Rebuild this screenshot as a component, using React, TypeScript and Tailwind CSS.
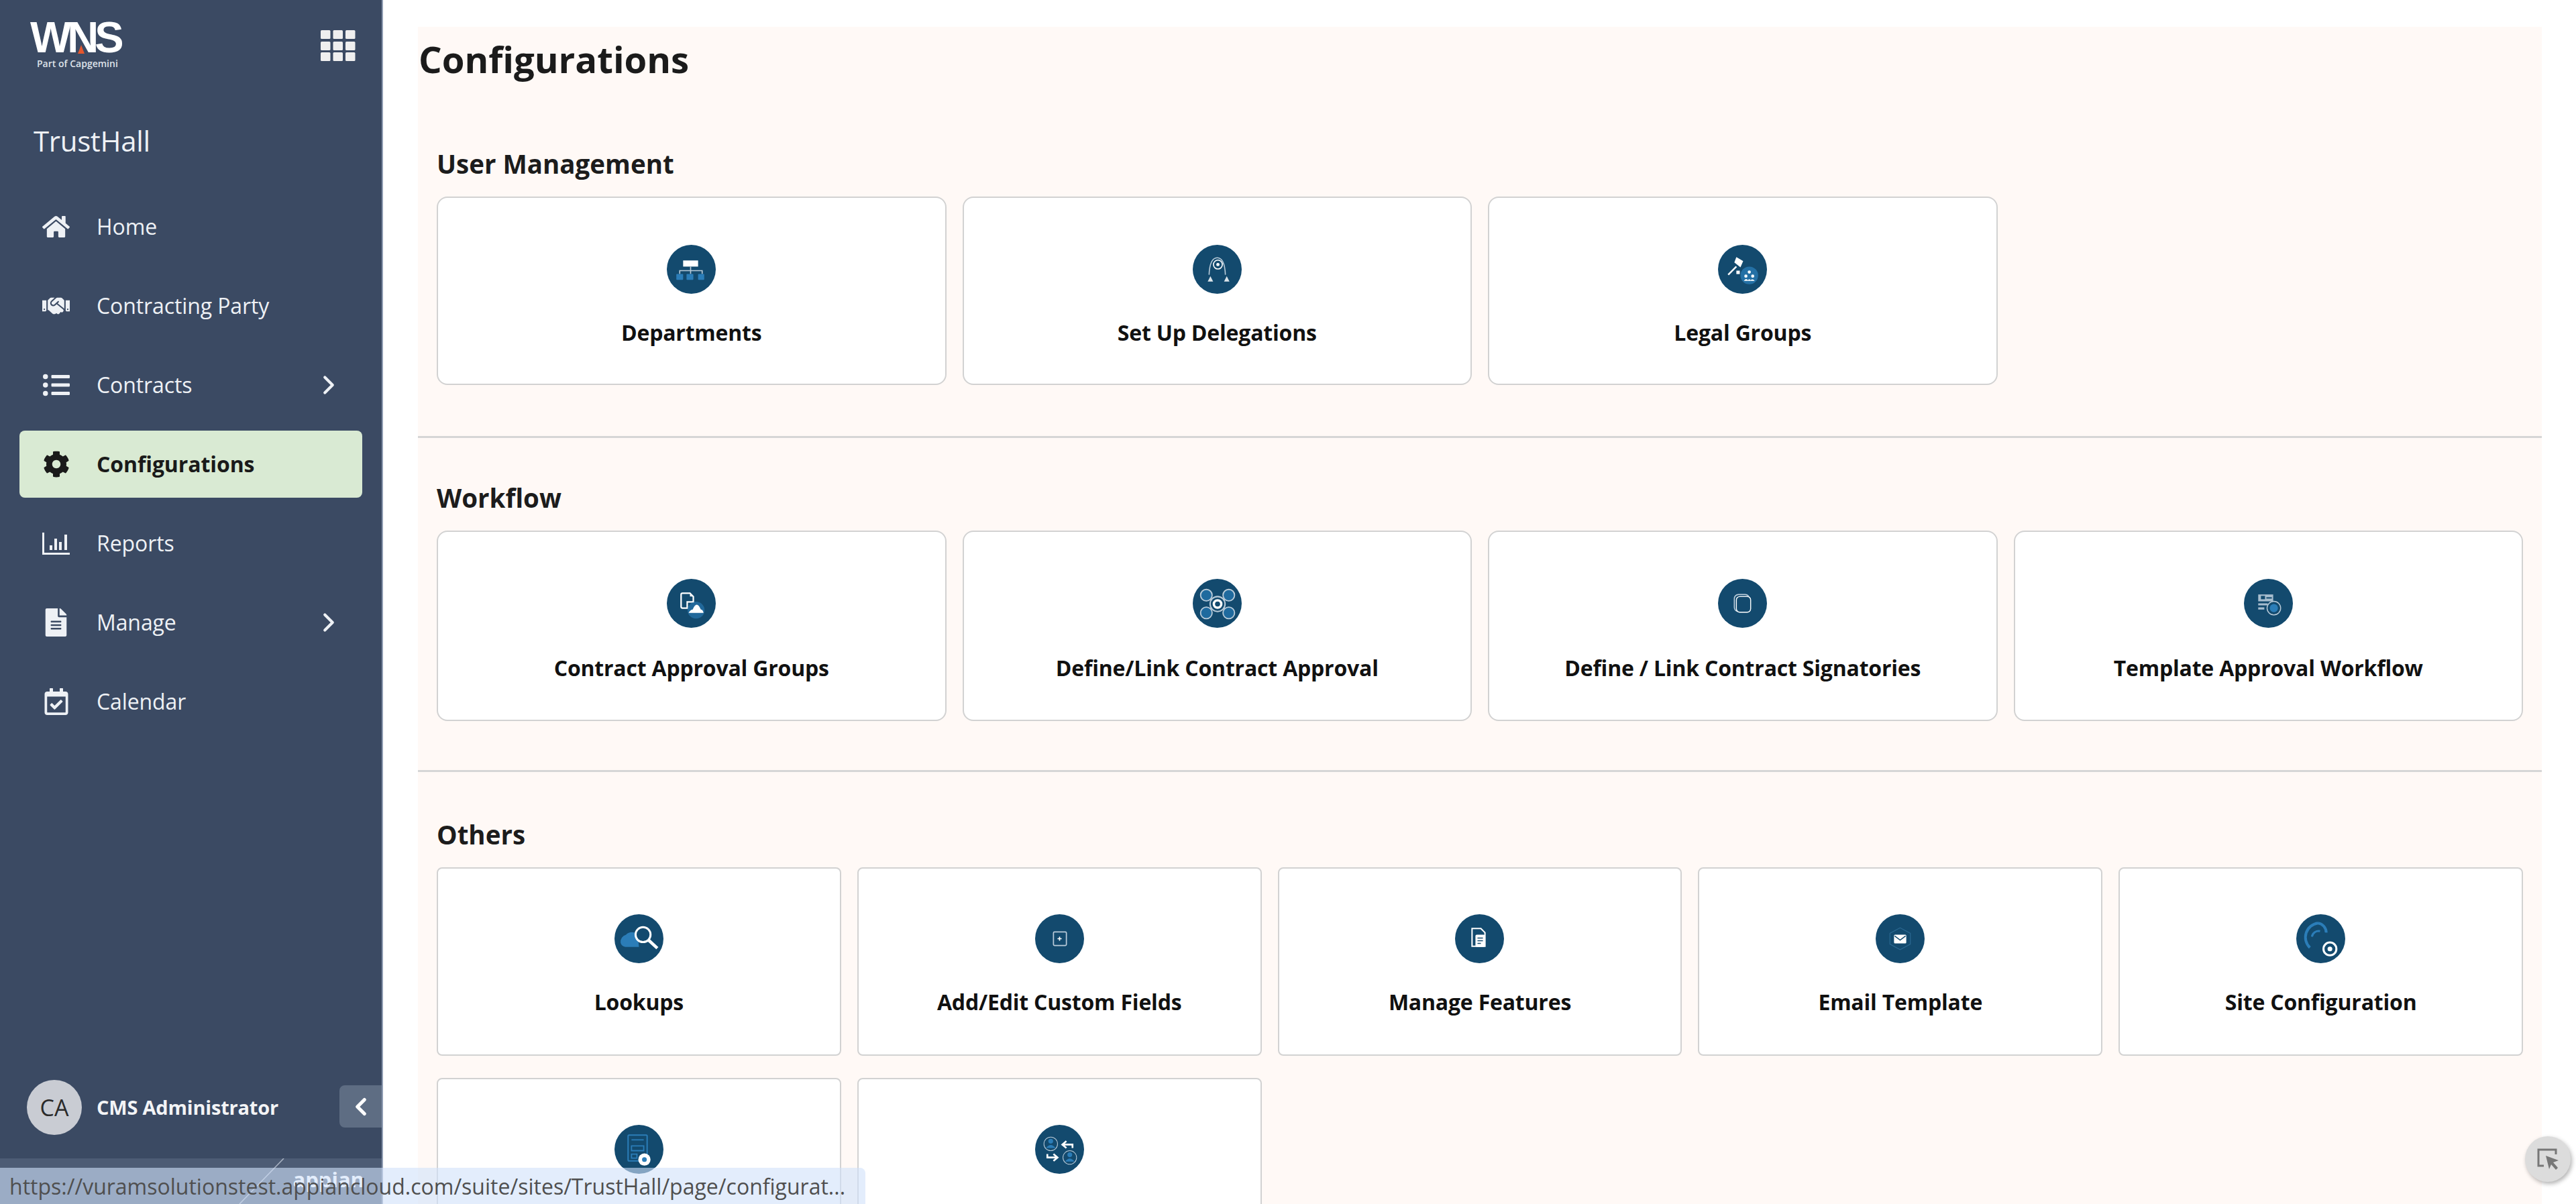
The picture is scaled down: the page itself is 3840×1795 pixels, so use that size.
import React from "react";
import { FaHome, FaHandshake, FaListUl, FaCog, FaFileAlt, FaRegCalendarCheck } from "react-icons/fa";
import { ChevronRight, ChevronLeft } from "lucide-react";

const W = "#ffffff";
const B = "#2b7db8";
const G = "#b9cbd9";

const Disc = ({ children }: { children?: React.ReactNode }) => (
  <svg viewBox="0 0 72 72" className="w-[73px] h-[73px] shrink-0">
    <circle cx="36" cy="36" r="36" fill="#134a6e" />
    {children}
  </svg>
);

const icons: Record<string, React.ReactNode> = {
  departments: (
    <Disc>
      <rect x="24" y="23" width="22" height="9" fill={W} />
      <path d="M35 32v11M19 43v-5h33v5M28 38h14" stroke={G} strokeWidth="1.6" fill="none" />
      <rect x="14" y="43" width="10" height="8.5" rx="1" fill={B} />
      <rect x="29" y="43" width="10" height="8.5" rx="1" fill={B} />
      <rect x="46" y="43" width="9" height="8.5" rx="1" fill={B} />
    </Disc>
  ),
  delegations: (
    <Disc>
      <path d="M24 44C25 22 32 19 36 19s11 3 12 25" stroke={G} strokeWidth="1.6" fill="none" />
      <circle cx="37" cy="29" r="6.5" stroke={W} strokeWidth="1.6" fill="none" />
      <circle cx="37" cy="29" r="2.4" fill={W} />
      <path d="M22 54l4-8 4 8zM46 54l4-8 4 8z" fill={W} opacity=".85" />
    </Disc>
  ),
  legal: (
    <Disc>
      <circle cx="46" cy="45" r="13" fill={B} opacity=".75" />
      <path d="M27 18l10 6-4 9-9-7z" fill={W} />
      <path d="M27 32L15 44" stroke={W} strokeWidth="2.4" />
      <rect x="27" y="38" width="5" height="5" fill={W} />
      <circle cx="41" cy="46" r="2.3" fill={W} />
      <circle cx="46" cy="40" r="2.3" fill={W} />
      <circle cx="51" cy="46" r="2.3" fill={W} />
      <path d="M38 53q3-5 6-1q2-3 4 0q3-3 6 1z" fill={W} />
    </Disc>
  ),
  approvalGroups: (
    <Disc>
      <path d="M23 21h11l5 5v8h-9v9h-7a2 2 0 0 1-2-2V23a2 2 0 0 1 2-2z" stroke={W} strokeWidth="2.2" fill="none" />
      <path d="M34 21l5 5h-5z" fill={W} />
      <circle cx="43" cy="46" r="12.5" fill={B} opacity=".6" />
      <path d="M32 50q3-5 6-5q3-7 6-7t6 7q3 0 4 5z" fill={W} />
    </Disc>
  ),
  linkApproval: (
    <Disc>
      <g stroke={G} strokeWidth="1.8" fill="#1f6a9e">
        <circle cx="20" cy="24" r="8.5" />
        <circle cx="53" cy="24" r="8.5" />
        <circle cx="20" cy="50" r="8.5" />
        <circle cx="53" cy="50" r="8.5" />
      </g>
      <path d="M26 30l4 3M47 30l-4 3M26 44l4-3M47 44l-4-3" stroke={G} strokeWidth="2" />
      <circle cx="36.5" cy="37" r="11" stroke={G} strokeWidth="2" fill="#134a6e" />
      <circle cx="36.5" cy="37" r="5.5" stroke={W} strokeWidth="3.5" fill="none" />
    </Disc>
  ),
  signatories: (
    <Disc>
      <rect x="24" y="23" width="22" height="25" rx="6" stroke={G} strokeWidth="1.6" fill="none" />
      <rect x="27" y="26" width="21" height="23" rx="5" stroke={W} strokeWidth="1.4" fill="#134a6e" />
    </Disc>
  ),
  templateFlow: (
    <Disc>
      <path d="M21 23h22v10H21zM21 36h14v3H21zM21 42h9v3h-9z" fill={G} opacity=".9" />
      <rect x="25" y="25" width="6" height="5" fill="#134a6e" />
      <rect x="33" y="27" width="8" height="2" fill="#134a6e" />
      <circle cx="44" cy="43" r="10" fill="#134a6e" stroke={G} strokeWidth="1.4" />
      <circle cx="44" cy="43" r="6" fill={B} />
    </Disc>
  ),
  lookups: (
    <Disc>
      <path d="M9 42a11 11 0 0 1 8-12a12 12 0 0 1 17 0l2 18H16a8 8 0 0 1-7-6z" fill={B} />
      <circle cx="42" cy="30" r="11" stroke={W} strokeWidth="3" fill="#134a6e" />
      <path d="M50 38l13 12" stroke={W} strokeWidth="4.5" />
    </Disc>
  ),
  customFields: (
    <Disc>
      <rect x="27" y="26" width="19" height="20" rx="1.5" stroke={G} strokeWidth="1.7" fill="none" />
      <path d="M33 36h6M36 33v6" stroke={W} strokeWidth="1.6" />
    </Disc>
  ),
  features: (
    <Disc>
      <path d="M25 21h13l6 6v20H25z" stroke={W} strokeWidth="2" fill="none" />
      <rect x="30" y="30" width="14" height="18" rx="2" fill={W} />
      <path d="M33 35h8M33 39h8M33 43h5" stroke="#134a6e" strokeWidth="1.5" />
    </Disc>
  ),
  email: (
    <Disc>
      <path d="M36 20l15 8v16l-15 8-15-8V28z" stroke="#2a6790" strokeWidth="1.2" fill="none" />
      <rect x="27" y="30" width="18" height="13" rx="1.5" fill={W} />
      <path d="M28 32l8 6 8-6" stroke="#134a6e" strokeWidth="1.5" fill="none" />
    </Disc>
  ),
  site: (
    <Disc>
      <path d="M32 13a21 21 0 0 0-12 36M32 13a14 14 0 0 1 12 14" stroke={B} strokeWidth="4" fill="none" />
      <path d="M23 33a10 10 0 0 1 12-8" stroke={B} strokeWidth="3" fill="none" />
      <circle cx="49.5" cy="51" r="13" fill="#134a6e" />
      <circle cx="49.5" cy="51" r="9.5" stroke={W} strokeWidth="3" fill="none" />
      <circle cx="49.5" cy="51" r="3.5" fill={W} />
    </Disc>
  ),
  docGear: (
    <Disc>
      <rect x="20" y="15" width="28" height="38" rx="1.5" stroke={B} strokeWidth="2" fill="none" />
      <path d="M25 22h18M25 31h18v7H25zM25 43h8v6h-8z" stroke={B} strokeWidth="1.8" fill="none" />
      <circle cx="44" cy="51" r="9" fill={W} />
      <circle cx="44" cy="51" r="3.5" fill={B} />
    </Disc>
  ),
  transfer: (
    <Disc>
      <circle cx="23" cy="28" r="10" stroke={G} strokeWidth="1" fill="none" />
      <circle cx="23" cy="24" r="3.5" fill={B} />
      <path d="M16 34q7-9 14 0z" fill={B} />
      <circle cx="51" cy="48" r="10" stroke={G} strokeWidth="1" fill="none" />
      <circle cx="51" cy="44" r="3.5" fill={B} />
      <path d="M44 54q7-9 14 0z" fill={B} />
      <path d="M55 34v-5H42M46 24l-6 5 6 5" stroke={W} strokeWidth="2.6" fill="none" />
      <path d="M18 43v5h13M27 43l6 5-6 5" stroke={W} strokeWidth="2.6" fill="none" />
    </Disc>
  ),
};

const Card = ({ icon, label, kind }: { icon: string; label?: string; kind: "user" | "flow" | "other" }) => (
  <div
    className={`bg-white border-2 border-[#d2d2d2] flex flex-col items-center ${
      kind === "user"
        ? "h-[281px] rounded-[16px] pt-[70px]"
        : kind === "flow"
        ? "h-[284px] rounded-[16px] pt-[70px]"
        : "h-[281px] rounded-[8px] pt-[68px]"
    }`}
  >
    {icons[icon]}
    {label && (
      <div
        className={`${
          kind === "flow" ? "mt-[38px]" : "mt-[36px]"
        } text-[32px] leading-[44px] font-bold text-[#111111] tracking-[-0.2px]`}
      >
        {label}
      </div>
    )}
  </div>
);

const Heading = ({ children }: { children: React.ReactNode }) => (
  <h2 className="h-[50px] leading-[50px] text-[38.5px] font-bold text-[#1c1c1c] mb-[24px]">{children}</h2>
);

const Item = ({
  icon,
  label,
  active,
  chevron,
}: {
  icon: React.ReactNode;
  label: string;
  active?: boolean;
  chevron?: boolean;
}) => (
  <div
    className={`h-[100px] mb-[18px] mx-[29px] rounded-[8px] flex items-center pl-[34px] pr-[27px] text-[32px] ${
      active ? "bg-[#d9ead3] text-[#1a1a1a] font-bold" : "text-[#eef1f5]"
    }`}
  >
    <span className="w-[41px] h-[41px] flex items-center justify-center shrink-0 mr-[40px]">{icon}</span>
    <span className="flex-1 tracking-[-0.1px]">{label}</span>
    {chevron && <ChevronRight size={46} strokeWidth={2.2} className="text-[#eef1f5]" />}
  </div>
);

export default function App() {
  return (
    <div className="relative flex w-[3840px] h-[1795px] overflow-hidden bg-white font-['Open_Sans',sans-serif]">
      {/* Sidebar */}
      <aside className="relative w-[571px] h-full shrink-0 bg-[#3b4a63] border-r-2 border-[#8e9bb1] flex flex-col">
        <div className="flex justify-between items-start pl-[45px] pr-[39px] pt-[24px] h-[177px]">
          <div className="relative">
            <div className="font-['Liberation_Sans',sans-serif] font-bold text-white text-[65px] leading-[64px] tracking-[-6px]">
              WNS
            </div>
            <span className="absolute left-[71px] top-[43px] w-0 h-0 border-l-[5px] border-r-[5px] border-b-[13px] border-l-transparent border-r-transparent border-b-[#e4572e]" />
            <div className="pl-[10px] mt-[-2px] text-[14px] leading-[18px] text-[#dfe3ea] font-semibold">Part of Capgemini</div>
          </div>
          <svg viewBox="0 0 52 46" className="w-[52px] h-[46px] mt-[21px]" fill="#efefef">
            {[0, 18.5, 37].map((x) =>
              [0, 17, 33].map((y) => <rect key={`${x}-${y}`} x={x} y={y} width="14.5" height="13" rx="1.5" />)
            )}
          </svg>
        </div>
        <div className="pl-[50px] h-[66px] leading-[66px] text-[42px] text-[#eef1f5] tracking-[-0.3px]">TrustHall</div>
        <nav className="mt-[45px]">
          <Item icon={<FaHome size={42} color="#eef1f5" />} label="Home" />
          <Item icon={<FaHandshake size={42} color="#eef1f5" />} label="Contracting Party" />
          <Item icon={<FaListUl size={40} color="#eef1f5" />} label="Contracts" chevron />
          <Item icon={<FaCog size={40} color="#1a1a1a" />} label="Configurations" active />
          <Item
            icon={
              <svg viewBox="0 0 41 33" className="w-[41px] h-[33px]" fill="#eef1f5">
                <path d="M0 0h3v30h38v3H0z" />
                <rect x="11" y="19" width="4" height="7" />
                <rect x="18" y="9" width="4" height="17" />
                <rect x="25" y="14" width="4" height="12" />
                <rect x="33" y="3" width="4" height="23" />
              </svg>
            }
            label="Reports"
          />
          <Item icon={<FaFileAlt size={42} color="#eef1f5" />} label="Manage" chevron />
          <Item icon={<FaRegCalendarCheck size={40} color="#eef1f5" />} label="Calendar" />
        </nav>
        <div className="mt-auto flex items-center h-[84px] pl-[40px] mb-[34px] relative">
          <div className="w-[82px] h-[82px] rounded-full bg-[#c9ccd3] flex items-center justify-center text-[34px] text-[#2a2a2a] shrink-0">
            CA
          </div>
          <div className="ml-[22px] text-[29px] font-bold text-[#f3f4f6] tracking-[-0.2px]">CMS Administrator</div>
          <div className="absolute right-0 top-[9px] w-[63px] h-[63px] rounded-l-[8px] bg-[#5e6d83] flex items-center justify-center">
            <ChevronLeft size={42} strokeWidth={3} color="#ffffff" />
          </div>
        </div>
        <div className="relative h-[68px] bg-[#4d5c75] overflow-hidden text-right pr-[26px]">
          <svg viewBox="0 0 570 68" className="absolute inset-0 w-[570px] h-[68px]">
            <path d="M423 0L357 68" stroke="#aab4c4" strokeWidth="1.5" />
          </svg>
          <span className="relative top-[8px] text-[31px] font-bold text-white">appian</span>
        </div>
      </aside>

      {/* Main */}
      <main className="flex-1 min-w-0 pl-[52px] pr-[51px] pt-[40px]">
        <div className="bg-[#fff9f6] h-[1760px]">
          <h1 className="h-[96px] leading-[96px] pl-[1px] text-[54.5px] font-bold text-[#1b1b1b]">Configurations</h1>

          <section className="px-[28px] pt-[83px] pb-[76px] border-b-[3px] border-[#d6d6d6]">
            <Heading>User Management</Heading>
            <div className="grid grid-cols-4 gap-[24px]">
              <Card kind="user" icon="departments" label="Departments" />
              <Card kind="user" icon="delegations" label="Set Up Delegations" />
              <Card kind="user" icon="legal" label="Legal Groups" />
            </div>
          </section>

          <section className="px-[28px] pt-[64px] pb-[73px] border-b-[3px] border-[#d6d6d6]">
            <Heading>Workflow</Heading>
            <div className="grid grid-cols-4 gap-[24px]">
              <Card kind="flow" icon="approvalGroups" label="Contract Approval Groups" />
              <Card kind="flow" icon="linkApproval" label="Define/Link Contract Approval" />
              <Card kind="flow" icon="signatories" label="Define / Link Contract Signatories" />
              <Card kind="flow" icon="templateFlow" label="Template Approval Workflow" />
            </div>
          </section>

          <section className="px-[28px] pt-[68px]">
            <Heading>Others</Heading>
            <div className="grid grid-cols-5 gap-x-[24px] gap-y-[33px]">
              <Card kind="other" icon="lookups" label="Lookups" />
              <Card kind="other" icon="customFields" label="Add/Edit Custom Fields" />
              <Card kind="other" icon="features" label="Manage Features" />
              <Card kind="other" icon="email" label="Email Template" />
              <Card kind="other" icon="site" label="Site Configuration" />
              <Card kind="other" icon="docGear" />
              <Card kind="other" icon="transfer" />
            </div>
          </section>
        </div>
      </main>

      {/* Browser link status bubble */}
      <div className="absolute left-0 bottom-0 w-[1290px] h-[54px] rounded-tr-[8px] bg-[#d1e1fa]/60 pl-[14px] leading-[56px] text-[32px] text-[#4f4f4f] whitespace-nowrap overflow-hidden">
        https://vuramsolutionstest.appiancloud.com/suite/sites/TrustHall/page/configurat...
      </div>

      {/* Floating selection button */}
      <div className="absolute left-[3764px] top-[1694px] w-[68px] h-[68px] rounded-full bg-[#dcdcdc] shadow-[2px_3px_6px_rgba(0,0,0,0.3)] flex items-center justify-center">
        <svg viewBox="0 0 32 32" className="w-[32px] h-[32px]" fill="none">
          <path d="M10 26H2V2h26v7" stroke="#777777" strokeWidth="3" />
          <path d="M13 11l19 7-8 3 7 8-3 3-7-8-3 7z" fill="#777777" />
        </svg>
      </div>
    </div>
  );
}
